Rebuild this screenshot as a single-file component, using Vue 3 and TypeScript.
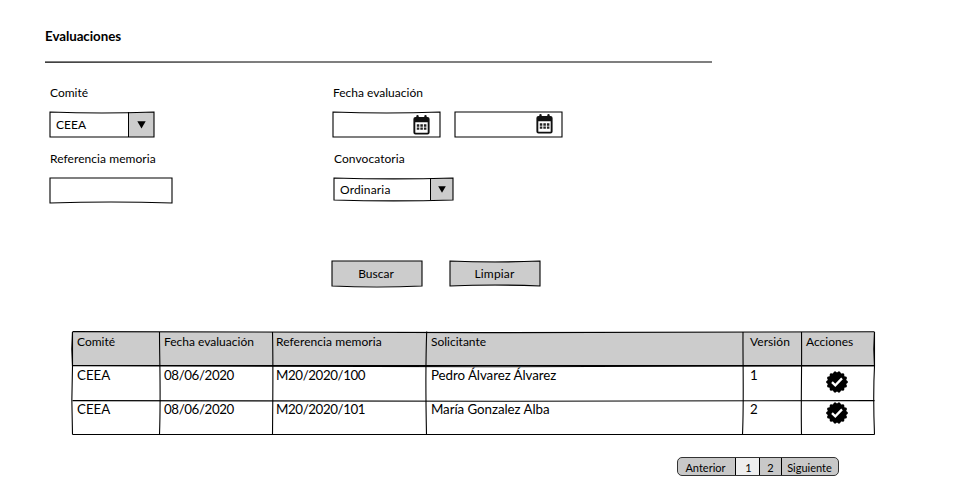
<script setup lang="ts">
interface Row {
  comite: string
  fecha: string
  referencia: string
  solicitante: string
  version: number
}

const headers: string[] = ['Comité', 'Fecha evaluación', 'Referencia memoria', 'Solicitante', 'Versión', 'Acciones']

const rows: Row[] = [
  { comite: 'CEEA', fecha: '08/06/2020', referencia: 'M20/2020/100', solicitante: 'Pedro Álvarez Álvarez', version: 1 },
  { comite: 'CEEA', fecha: '08/06/2020', referencia: 'M20/2020/101', solicitante: 'María Gonzalez Alba', version: 2 },
]

// Hand-drawn rectangle: the top and bottom edges bow by the given amounts.
function frame(w: number, h: number, top = 0, bottom = 0): string {
  const t = w / 3
  return `M0 0C${t} ${top} ${2 * t} ${top} ${w} 0L${w} ${h}C${2 * t} ${h + bottom} ${t} ${h + bottom} 0 ${h}Z`
}

// Scalloped outline of the approval badge.
function badge(points: number, outer: number, inner: number): string {
  const out: string[] = []
  const step = (Math.PI * 2) / points
  for (let i = 0; i < points; i++) {
    const a = i * step
    for (const [offset, r] of [[-0.13, outer], [0.13, outer], [0.5, inner]]) {
      const angle = a + offset * step
      out.push(`${(11 + r * Math.cos(angle)).toFixed(2)},${(11 + r * Math.sin(angle)).toFixed(2)}`)
    }
  }
  return out.join(' ')
}

const badgePoints = badge(14, 10.8, 9.4)
</script>

<template>
  <main class="page">
    <h1 class="title">Evaluaciones</h1>
    <svg class="rule" width="667" height="4"><path d="M0 2.1C220 1.3 440 1.3 667 2" /></svg>

    <form class="filters" @submit.prevent>
      <div class="field">
        <label>Comité</label>
        <div class="box select comite">
          <svg class="sketch"><path :d="frame(104, 25, 1.3, 0)" /></svg>
          <span class="value">CEEA</span>
          <span class="arrow"><svg width="9" height="8"><path d="M.3 .3H8.7L4.5 7.5Z" /></svg></span>
        </div>
      </div>
      <div class="field">
        <label>Fecha evaluación</label>
        <div class="dates">
          <div v-for="n in 2" :key="n" class="box date" :class="{ second: n === 2 }">
            <svg class="sketch"><path :d="frame(107, 25, n === 1 ? 1.3 : 0, 0)" /></svg>
            <svg class="calendar" width="17" height="20" viewBox="0 0 17 20">
              <path fill-rule="evenodd" d="M2.5 2H14.5Q16.6 2 16.6 4V17.5Q16.6 19.6 14.5 19.6H2.5Q.4 19.6 .4 17.5V4Q.4 2 2.5 2ZM2.3 7.2V17.2Q2.3 17.7 2.8 17.7H14.2Q14.7 17.7 14.7 17.2V7.2Z" />
              <path class="ring" d="M4.5 1.2V4M12.5 1.2V4" />
              <path class="days" d="M3.8 10.5H13.4M3.8 13.6H13.4" />
            </svg>
          </div>
        </div>
      </div>
      <div class="field">
        <label class="wide">Referencia memoria</label>
        <div class="box reference">
          <svg class="sketch"><path :d="frame(122, 25, 0, -1.3)" /></svg>
        </div>
      </div>
      <div class="field convocatoria-field">
        <label class="wide">Convocatoria</label>
        <div class="box select convocatoria">
          <svg class="sketch"><path :d="frame(119, 22, 1.2, 1.2)" /></svg>
          <span class="value roomy">Ordinaria</span>
          <span class="arrow"><svg width="8" height="7"><path d="M.2 .2H7.8L4 6.8Z" /></svg></span>
        </div>
      </div>
    </form>

    <div class="buttons">
      <button type="button" class="box">
        <svg class="sketch"><path :d="frame(90, 25, 0, 1.3)" /></svg><span>Buscar</span>
      </button>
      <button type="button" class="box">
        <svg class="sketch"><path :d="frame(90, 25, 1.3, -1.3)" /></svg><span class="roomy">Limpiar</span>
      </button>
    </div>

    <div class="grid">
      <table>
        <colgroup>
          <col class="c1" /><col class="c2" /><col class="c3" /><col class="c4" /><col class="c5" /><col class="c6" />
        </colgroup>
        <thead>
          <tr><th v-for="header in headers" :key="header">{{ header }}</th></tr>
        </thead>
        <tbody>
          <tr v-for="row in rows" :key="row.referencia">
            <td>{{ row.comite }}</td>
            <td class="digits">{{ row.fecha }}</td>
            <td class="digits">{{ row.referencia }}</td>
            <td class="name">{{ row.solicitante }}</td>
            <td>{{ row.version }}</td>
            <td class="action">
              <svg width="22" height="22" viewBox="0 0 22 22">
                <polygon :points="badgePoints" />
                <path class="check" d="M6 11.2L9.3 14.4L16 7.4" />
              </svg>
            </td>
          </tr>
        </tbody>
      </table>
      <svg class="lines" width="803" height="104">
        <path d="M.5 -.4C250 1 550 1 802.5 -.3" />
        <path d="M.5 33.5C280 33 550 33 802.5 33.6" />
        <path d="M.5 33.6C250 35.2 550 35.2 802.5 33.6" />
        <path d="M.5 68.6C260 69.5 540 69.4 802.5 68.6" />
        <path d="M.5 102.5H802.5" />
        <path d="M.5 0C-.4 11 -.4 23 .5 34C-.3 55 -.3 80 .5 102.5" />
        <path d="M87.5 0C87.5 30 89 60 87.5 102.5" />
        <path d="M200.5 0C201.3 34 200.8 70 200.5 102.5" />
        <path d="M354.7 -.5C353.5 34 353.8 70 354.5 102.5" />
        <path d="M671 0C670.8 34 672 70 670.5 102.5" />
        <path d="M729.5 0C730 34 728.8 70 729.5 102.5" />
        <path d="M802.5 0C801.6 11 801.6 23 802.5 34C801.4 55 801.6 80 802.5 102.5" />
        <path d="M.5 0V34M802.5 0V34" />
      </svg>
    </div>

    <nav class="pager">
      <span class="previous">Anterior</span><span class="number current">1</span><span class="number">2</span><span class="next">Siguiente</span>
    </nav>
  </main>
</template>

<style>
body {
  background: #fff;
}
</style>

<style scoped>
.page {
  box-sizing: border-box;
  width: 960px;
  height: 500px;
  padding: 26px 45px 0;
  font-family: Lato, 'Liberation Sans', sans-serif;
  font-size: 12px;
  color: #000;
  overflow: hidden;
}

.title {
  margin: 0;
  font-size: 13.33px;
  font-weight: 700;
  line-height: 20px;
  letter-spacing: -0.05px;
}

.rule {
  display: block;
  margin-top: 14px;
}

.rule path,
.sketch path,
.lines path {
  fill: none;
  stroke: #000;
  stroke-width: 1.1;
}

.filters {
  display: grid;
  grid-template-columns: 283px 300px;
  grid-template-rows: 66px 66px;
  margin: 21px 0 0 5px;
}

.field label {
  display: block;
  height: 27px;
  line-height: 16px;
}

.wide {
  letter-spacing: 0.06px;
}

.roomy {
  letter-spacing: 0.16px;
}

.convocatoria-field {
  padding-left: 1px;
}

.box {
  position: relative;
  display: flex;
  align-items: center;
  height: 25px;
}

.sketch {
  position: absolute;
  inset: 0;
  width: 100%;
  height: 100%;
  overflow: visible;
}

.value {
  flex: 1;
  padding-left: 6px;
}

.arrow {
  display: flex;
  align-items: center;
  justify-content: center;
  box-sizing: border-box;
  height: 100%;
  padding-right: 1px;
  background: #ccc;
  border-left: 1px solid #000;
}

.comite {
  width: 104px;
}

.comite .arrow {
  width: 26px;
}

.convocatoria {
  width: 119px;
  height: 22px;
}

.convocatoria .arrow {
  width: 23px;
}

.reference {
  width: 122px;
}

.dates {
  display: flex;
  gap: 15px;
}

.date {
  box-sizing: border-box;
  width: 107px;
  justify-content: flex-end;
  padding: 1px 10px 0 0;
}

.second {
  padding: 0 9px 1px 0;
}

.calendar {
  fill: #111;
}

.ring {
  stroke: #111;
  stroke-width: 2.4;
  stroke-linecap: round;
}

.days {
  stroke: #222;
  stroke-width: 2.4;
  stroke-dasharray: 2.5 1.05;
}

.buttons {
  display: flex;
  gap: 28px;
  margin: 44px 0 0 287px;
}

.buttons .box {
  justify-content: center;
  width: 90px;
  padding: 0 2px 0 0;
  border: 0;
  background: #ccc;
  color: #000;
  font: inherit;
}

.buttons .box + .box {
  padding-right: 1px;
}

.grid {
  position: relative;
  width: 803px;
  margin: 46px 0 0 27px;
}

.lines {
  position: absolute;
  inset: 0;
  overflow: visible;
}

table {
  width: 802px;
  table-layout: fixed;
  border-collapse: collapse;
}

.c1 { width: 88px; }
.c2 { width: 112px; }
.c3 { width: 154px; }
.c4 { width: 319px; }
.c5 { width: 56px; }
.c6 { width: 73px; }

th,
td {
  box-sizing: border-box;
  padding: 0 0 0 5px;
  text-align: left;
  vertical-align: top;
  white-space: nowrap;
}

th:nth-child(2),
td:nth-child(2),
th:nth-child(3),
td:nth-child(3) {
  padding-left: 4px;
}

th {
  height: 34px;
  padding-top: 2px;
  background: #ccc;
  font-weight: 400;
  line-height: 16px;
}

th:nth-child(3),
th:nth-child(5) {
  letter-spacing: 0.06px;
}

td {
  height: 34px;
  font-size: 13.33px;
  line-height: 19px;
}

.digits {
  letter-spacing: -0.4px;
}

.name {
  letter-spacing: -0.06px;
}

td.action {
  padding: 5px 0 0 25px;
  line-height: 0;
}

tbody tr:last-child .action {
  padding-top: 2px;
}

.check {
  fill: none;
  stroke: #fff;
  stroke-width: 2.3;
}

.pager {
  display: flex;
  box-sizing: border-box;
  width: 162px;
  height: 19px;
  margin: 23px 0 0 632px;
  overflow: hidden;
  border: 1px solid #333;
  border-radius: 5px;
  background: #c8c8c8;
  font-size: 11px;
  line-height: 19px;
  text-align: center;
}

.pager span {
  box-sizing: border-box;
}

.pager span + span {
  border-left: 1px solid #000;
}

.pager .previous {
  width: 57px;
  padding-right: 2px;
}

.number {
  width: 22px;
}

.pager .current {
  width: 24px;
  padding-left: 2px;
  background: #eee;
}

.next {
  flex: 1;
  padding-right: 1px;
}
</style>
